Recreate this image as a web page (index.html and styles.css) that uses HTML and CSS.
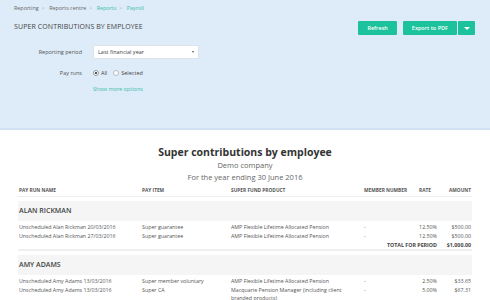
FILE: index.html
```html
<!DOCTYPE html>
<html lang="en">
<head>
  <meta charset="UTF-8">
  <title>Super contributions by employee</title>
  <link rel="stylesheet" href="styles.css">
</head>
<body>
<div class="top">
  <div class="crumbs">
    <span>Reporting</span><span class="sep">&gt;</span>
    <span>Reports centre</span><span class="sep">&gt;</span>
    <a href="#">Reports</a><span class="sep">&gt;</span>
    <a href="#">Payroll</a>
  </div>
  <div class="head">
    <h1>SUPER CONTRIBUTIONS BY EMPLOYEE</h1>
    <div class="actions">
      <button class="btn">Refresh</button>
      <div class="split">
        <button class="btn">Export to PDF</button>
        <button class="btn caret"><span></span></button>
      </div>
    </div>
  </div>
  <div class="form">
    <label>Reporting period</label>
    <div class="select">Last financial year<span class="arrow"></span></div>
    <label>Pay runs</label>
    <div class="radios">
      <span class="radio on"></span>All
      <span class="radio"></span>Selected
    </div>
    <span></span>
    <a href="#" class="more">Show more options</a>
  </div>
</div>

<div class="report">
  <h2>Super contributions by employee</h2>
  <p class="sub">Demo company</p>
  <p class="sub">For the year ending 30 June 2016</p>
  <table>
    <colgroup>
      <col style="width:123px"><col style="width:89px"><col style="width:133px">
      <col style="width:50px"><col style="width:25px"><col>
    </colgroup>
    <thead>
      <tr><th>PAY RUN NAME</th><th>PAY ITEM</th><th>SUPER FUND PRODUCT</th><th>MEMBER NUMBER</th><th class="rate">RATE</th><th class="r">AMOUNT</th></tr>
    </thead>
    <tbody>
      <tr class="gap"><td colspan="6"></td></tr>
      <tr class="group"><td colspan="6">ALAN RICKMAN</td></tr>
      <tr><td>Unscheduled Alan Rickman 20/03/2016</td><td>Super guarantee</td><td>AMP Flexible Lifetime Allocated Pension</td><td>-</td><td class="r">12.50%</td><td class="r">$500.00</td></tr>
      <tr><td>Unscheduled Alan Rickman 27/03/2016</td><td>Super guarantee</td><td>AMP Flexible Lifetime Allocated Pension</td><td>-</td><td class="r">12.50%</td><td class="r">$500.00</td></tr>
      <tr class="total"><td colspan="5" class="r">TOTAL FOR PERIOD</td><td class="r">$1,000.00</td></tr>
      <tr class="gap"><td colspan="6"></td></tr>
      <tr class="group"><td colspan="6">AMY ADAMS</td></tr>
      <tr><td>Unscheduled Amy Adams 13/03/2016</td><td>Super member voluntary</td><td>AMP Flexible Lifetime Allocated Pension</td><td>-</td><td class="r">2.50%</td><td class="r">$33.65</td></tr>
      <tr><td>Unscheduled Amy Adams 13/03/2016</td><td>Super CA</td><td>Macquarie Pension Manager (including client branded products)</td><td>-</td><td class="r">5.00%</td><td class="r">$67.31</td></tr>
    </tbody>
  </table>
</div>
</body>
</html>
```

FILE: styles.css
```css
body {
  margin: 0;
  font-family: "Open Sans", "Liberation Sans", sans-serif;
  color: #555;
  background: #fff;
}
a {
  color: #3bbfa8;
  text-decoration: none;
}
.top {
  background: #deebf8;
  height: 128px;
  border-bottom: 2px solid #d3e2f4;
  padding: 0 15px 0 14px;
}
.crumbs {
  font-size: 5.4px;
  padding-top: 4px;
  color: #666;
  height: 8px;
}
.crumbs .sep {
  color: #aaa;
  margin: 0 3px;
}
.head {
  display: flex;
  justify-content: space-between;
  align-items: center;
  margin-top: 9px;
}
h1 {
  margin: 0 0 4px;
  font-size: 7px;
  font-weight: normal;
  color: #444;
  letter-spacing: 0.1px;
}
.actions {
  display: flex;
  gap: 6px;
}
.btn {
  background: #1cc29b;
  color: #fff;
  border: 0;
  border-radius: 1px;
  height: 14px;
  padding: 0 9px;
  font-family: inherit;
  font-size: 5.5px;
  font-weight: 600;
}
.split {
  display: flex;
  gap: 1px;
}
.caret {
  width: 17px;
  padding: 0;
  display: flex;
  align-items: center;
  justify-content: center;
}
.caret span {
  border-left: 3px solid transparent;
  border-right: 3px solid transparent;
  border-top: 3px solid #fff;
}
.form {
  display: grid;
  grid-template-columns: 68px 106px;
  column-gap: 11px;
  row-gap: 10px;
  align-items: center;
  margin-top: 10px;
  font-size: 5.5px;
}
.form label {
  text-align: right;
  color: #555;
}
.select {
  background: #fff;
  height: 14px;
  border: 1px solid #dde3ea;
  box-sizing: border-box;
  display: flex;
  align-items: center;
  justify-content: space-between;
  padding: 0 4px;
  color: #444;
}
.arrow {
  border-left: 1.5px solid transparent;
  border-right: 1.5px solid transparent;
  border-top: 2px solid #555;
}
.radios {
  display: flex;
  align-items: center;
  color: #444;
}
.radio {
  width: 4px;
  height: 4px;
  border: 1px solid #bbb;
  border-radius: 50%;
  background: #fff;
  margin-right: 2px;
  display: inline-block;
}
.radios .radio:nth-of-type(2) {
  margin-left: 6px;
}
.radio.on {
  background: radial-gradient(circle, #555 1.2px, #fff 1.5px);
  border-color: #999;
}
.more {
  font-size: 5.5px;
  margin-top: -2px;
}
.report {
  padding: 15px 18px 0 18px;
}
h2 {
  margin: 0;
  text-align: center;
  font-size: 10.5px;
  font-weight: 700;
  color: #333;
  line-height: 14px;
}
.sub {
  margin: 0;
  text-align: center;
  font-size: 7.5px;
  line-height: 12px;
  color: #666;
}
.sub + .sub {
  line-height: 13px;
}
table {
  width: 454px;
  border-collapse: collapse;
  table-layout: fixed;
  margin-top: 0;
}
th {
  font-size: 4.8px;
  font-weight: 700;
  color: #555;
  text-align: left;
  padding: 3px 1px 3px;
  border-bottom: 1px solid #eee;
}
th.rate {
  padding-left: 6px;
}
td {
  font-size: 5.3px;
  color: #555;
  padding: 0 1px;
  height: 9px;
  vertical-align: top;
  line-height: 8px;
}
.r {
  text-align: right;
}
.gap td {
  height: 4px;
}
.group td {
  background: #f5f5f5;
  height: 20px;
  font-size: 7px;
  font-weight: 600;
  color: #444;
  vertical-align: middle;
  line-height: 20px;
}
.group + tr td {
  padding-top: 2px;
}
.total td {
  font-weight: 700;
  color: #444;
  border-bottom: 2px solid #eef0f2;
  height: 8px;
}
```
